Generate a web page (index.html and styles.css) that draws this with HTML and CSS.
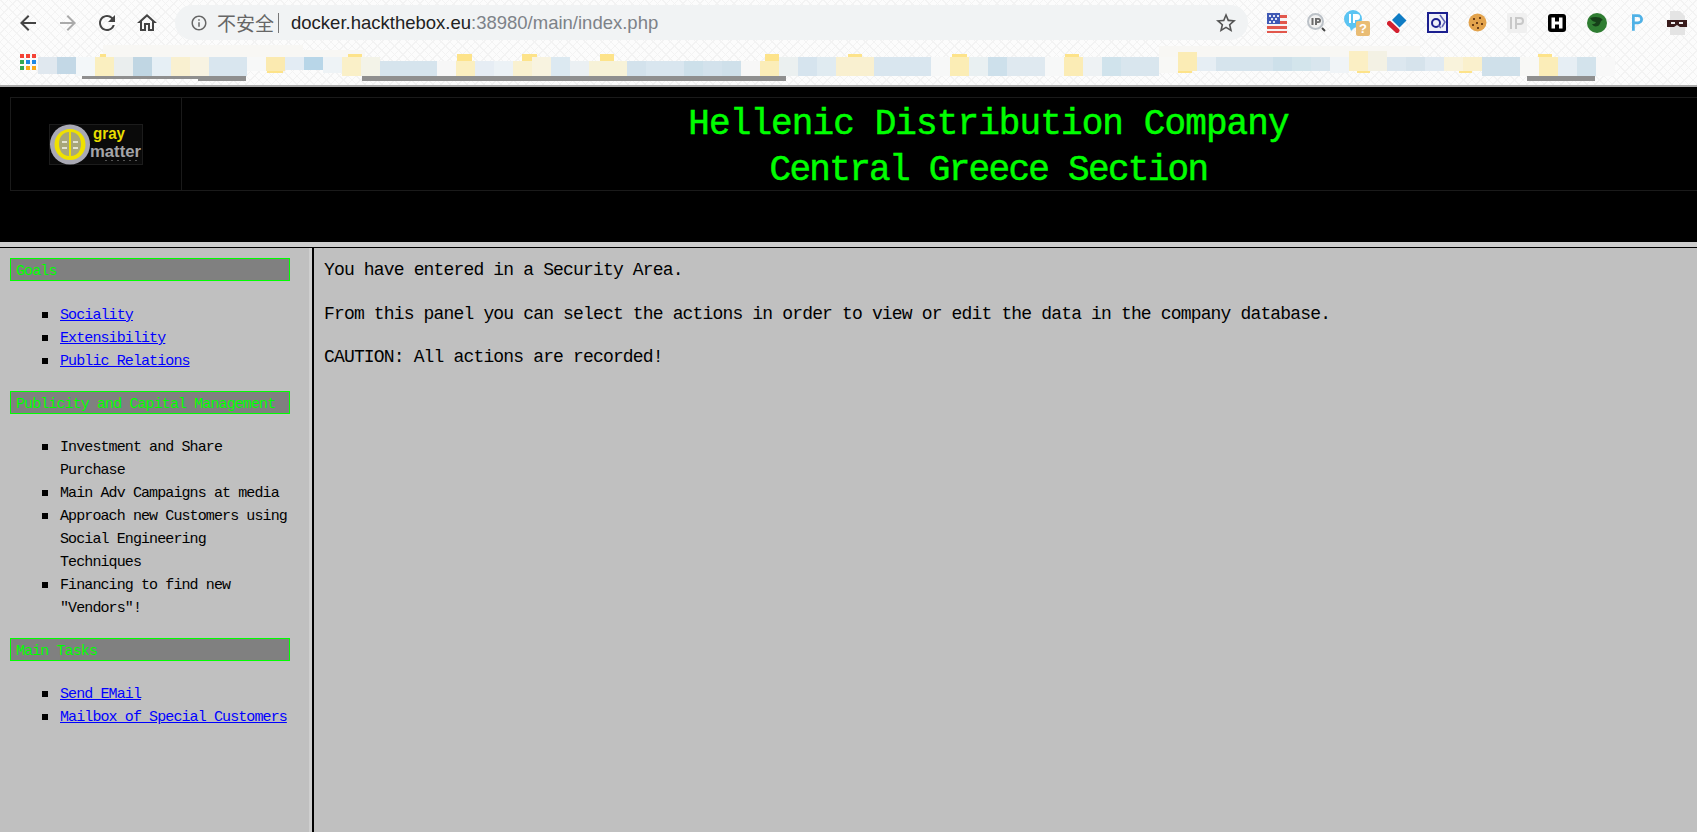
FILE: index.html
```html
<!DOCTYPE html>
<html>
	<head>
		<meta charset="utf-8">
		<title>Hellenic Distribution Company</title>
		<link rel="stylesheet" href="styles.css">
	</head>
	<body>
		<div class="chrome">
			<div class="toolbar">
				<svg class="nav" viewBox="0 0 24 24"><path d="M20 11H7.83l5.59-5.59L12 4l-8 8 8 8 1.41-1.41L7.83 13H20v-2z"/></svg>
				<svg class="nav nav-off" viewBox="0 0 24 24"><path d="M4 11h12.17l-5.59-5.59L12 4l8 8-8 8-1.41-1.41L16.17 13H4v-2z"/></svg>
				<svg class="nav" viewBox="0 0 24 24"><path d="M17.65 6.35A7.958 7.958 0 0 0 12 4c-4.42 0-7.99 3.58-7.99 8s3.57 8 7.99 8c3.73 0 6.84-2.55 7.73-6h-2.08A5.99 5.99 0 0 1 12 18c-3.31 0-6-2.69-6-6s2.69-6 6-6c1.66 0 3.14.69 4.22 1.78L13 11h7V4l-2.35 2.35z"/></svg>
				<svg class="nav" viewBox="0 0 24 24"><path d="M12 5.69l5 4.5V18h-2v-6H9v6H7v-7.81l5-4.5M12 3L2 12h3v8h6v-6h2v6h6v-8h3L12 3z"/></svg>
				<div class="omnibox">
					<svg class="info" viewBox="0 0 24 24"><path d="M11 7h2v2h-2zm0 4h2v6h-2zm1-9C6.48 2 2 6.48 2 12s4.48 10 10 10 10-4.48 10-10S17.52 2 12 2zm0 18c-4.41 0-8-3.59-8-8s3.59-8 8-8 8 3.59 8 8-3.59 8-8 8z"/></svg>
					<span class="unsafe">不安全</span>
					<span class="sep"></span>
					<span class="url">docker.hackthebox.eu<span class="url-rest">:38980/main/index.php</span></span>
					<svg class="star" viewBox="0 0 24 24"><path d="M22 9.24l-7.19-.62L12 2 9.19 8.63 2 9.24l5.46 4.73L5.82 21 12 17.27 18.18 21l-1.63-7.03L22 9.24zM12 15.4l-3.76 2.27 1-4.28-3.32-2.88 4.38-.38L12 6.1l1.71 4.04 4.38.38-3.32 2.88 1 4.28L12 15.4z"/></svg>
				</div>
				<div class="exts">
					<div class="ext">
						<svg width="20" height="20" viewBox="0 0 20 20">
							<rect width="20" height="20" fill="#f6f3f3"/>
							<rect y="2" width="20" height="3" fill="#e2574c"/><rect y="8" width="20" height="3" fill="#e2574c"/><rect y="13" width="20" height="3" fill="#e2574c"/><rect y="18" width="20" height="2" fill="#e2574c"/>
							<rect width="13" height="11" fill="#3f59b5"/>
							<path d="M2 2h2v2H2zM6 2h2v2H6zM10 2h2v2h-2zM4 5h2v2H4zM8 5h2v2H8zM2 8h2v2H2zM6 8h2v2H6z" fill="#dfe4f5"/>
						</svg>
					</div>
					<div class="ext">
						<svg width="20" height="20" viewBox="0 0 20 20">
							<circle cx="8.500" cy="8.500" r="7.500" fill="#f2f2f2" stroke="#bcc2c8" stroke-width="2"/>
							<path d="M4.500 5h2v7h-2zM8 5h3.500a2.500 2.500 0 0 1 0 5H10v2H8zM10 6.800v1.500h1.300a.75.75 0 0 0 0-1.500z" fill="#6b6b6b"/>
							<path d="M15 15l3 3" stroke="#444" stroke-width="2"/>
						</svg>
					</div>
					<div class="ext">
						<svg width="26" height="26" viewBox="0 0 26 26">
							<circle cx="9" cy="9" r="9" fill="#5cc4f2"/>
							<path d="M5 15l2 6 4-4z" fill="#5cc4f2"/>
							<path d="M5 4h2v9H5zM9 4h4a3 3 0 0 1 0 6h-2v3H9z" fill="#fff"/>
							<rect x="12" y="11" width="14" height="15" rx="2" fill="#e9bc74"/>
							<text class="ext-q" x="19" y="23" text-anchor="middle">?</text>
						</svg>
					</div>
					<div class="ext">
						<svg width="20" height="20" viewBox="0 0 20 20">
							<path d="M12 0l7.500 7.500-7 7-7.500-7.500z" fill="#0f7cc4"/>
							<path d="M2.500 10.500l7.500 7" stroke="#d3202f" stroke-width="5" stroke-linecap="round"/>
						</svg>
					</div>
					<div class="ext">
						<svg width="21" height="21" viewBox="0 0 21 21">
							<rect x="1" y="1" width="19" height="19" fill="#eef0f8" stroke="#1b1f8f" stroke-width="2"/>
							<circle cx="9" cy="11" r="4" fill="none" stroke="#1b1f8f" stroke-width="2"/>
							<path d="M11 13l3 3M13 3l5 7-3 5" fill="none" stroke="#5f63b3" stroke-width="1.500"/>
						</svg>
					</div>
					<div class="ext">
						<svg width="19" height="19" viewBox="0 0 19 19">
							<circle cx="9.500" cy="9.500" r="9" fill="#e3a34c"/>
							<path d="M5 5h2v2H5zM11 4h2v2h-2zM8 9h2v2H8zM13 10h2v2h-2zM4 11h2v2H4zM9 14h2v2H9z" fill="#6e3f17"/>
						</svg>
					</div>
					<div class="ext">
						<svg width="20" height="20" viewBox="0 0 20 20">
							<rect width="20" height="20" rx="2" fill="#f0f0f0"/>
							<path d="M3 4h2v12H3zM8 4h5a4 4 0 0 1 0 8h-3v4H8zM10 6v4h3a2 2 0 0 0 0-4z" fill="#c8c8c8"/>
						</svg>
					</div>
					<div class="ext">
						<svg width="18" height="18" viewBox="0 0 18 18">
							<rect width="18" height="18" rx="3" fill="#000"/>
							<path d="M3.500 3.500h3.500v4h4v-4h3.500v11H11v-4H7v4H3.500z" fill="#fff"/>
						</svg>
					</div>
					<div class="ext">
						<svg width="20" height="20" viewBox="0 0 20 20">
							<circle cx="10" cy="10" r="10" fill="#2f7d32"/>
							<path d="M3 5c4-1 9-2 13 2-3 0-2 4-5 6-3 1-5 0-6-2 2 0 3 0 4-2-2 0-4-1-6-4z" fill="#163f19"/>
						</svg>
					</div>
					<div class="ext">
						<svg width="11" height="17" viewBox="0 0 12 18">
							<path d="M0 0h6.500a5.500 5.500 0 0 1 0 11H3v7H0zM3 3v5h3.500a2.500 2.500 0 0 0 0-5z" fill="#4fb1e6"/>
						</svg>
					</div>
					<div class="ext">
						<svg width="20" height="24" viewBox="0 0 20 24">
							<path d="M3 0h10l5 5v19H3z" fill="#e4e4e4"/>
							<path d="M0 9h20v7h-7l-3-2-3 2H0z" fill="#3a1d1d"/>
							<path d="M4 11h4v2H4zM12 11h4v2h-4z" fill="#eee"/>
						</svg>
					</div>
				</div>
			</div>
			<svg class="bookmarks" width="1697" height="41" viewBox="0 0 1697 41">
				<!-- apps icon -->
				<rect x="20" y="9" width="4" height="4" fill="#f44336"/><rect x="26" y="9" width="4" height="4" fill="#f44336"/><rect x="32" y="9" width="4" height="4" fill="#f44336"/>
				<rect x="20" y="15" width="4" height="4" fill="#34a853"/><rect x="26" y="15" width="4" height="4" fill="#1e88e5"/><rect x="32" y="15" width="4" height="4" fill="#1e88e5"/>
				<rect x="20" y="21" width="4" height="4" fill="#34a853"/><rect x="26" y="21" width="4" height="4" fill="#fba919"/><rect x="32" y="21" width="4" height="4" fill="#fba919"/>
				<!-- smudged bookmark names -->
				<g fill="#f8f7f4">
					<rect x="103" y="0" width="200" height="12"/>
					<rect x="265" y="5" width="100" height="10"/>
					<rect x="1159" y="1" width="110" height="12"/>
					<rect x="1260" y="1" width="160" height="12"/>
				</g>
				<g fill="#8f8f8f">
					<rect x="82" y="31" width="116" height="3"/>
					<rect x="198" y="31" width="48" height="5"/>
					<rect x="362" y="31" width="424" height="5"/>
					<rect x="1527" y="31" width="68" height="5"/>
				</g>
				<g fill="#fde38a">
					<rect x="100" y="9" width="6" height="4"/>
					<rect x="348" y="9" width="14" height="4"/>
					<rect x="457" y="9" width="15" height="8"/>
					<rect x="522" y="9" width="15" height="8"/>
					<rect x="600" y="9" width="14" height="8"/>
					<rect x="765" y="9" width="14" height="8"/>
					<rect x="848" y="9" width="14" height="3"/>
					<rect x="952" y="9" width="15" height="3"/>
					<rect x="1065" y="9" width="14" height="3"/>
					<rect x="1538" y="9" width="14" height="3"/>
					<rect x="267" y="26" width="16" height="2"/>
					<rect x="1178" y="26" width="14" height="2"/>
					<rect x="1357" y="26" width="13" height="2"/>
					<rect x="1459" y="26" width="13" height="2"/>
				</g>
				<rect x="38" y="12" width="19" height="17" fill="#e0e8ef"/>
				<rect x="57" y="12" width="19" height="17" fill="#c3d8e6"/>
				<rect x="76" y="12" width="19" height="19" fill="#f3f7f9"/>
				<rect x="95" y="12" width="19" height="19" fill="#faefc0"/>
				<rect x="114" y="12" width="19" height="19" fill="#eaeeee"/>
				<rect x="133" y="12" width="19" height="19" fill="#c0d6e3"/>
				<rect x="152" y="12" width="19" height="19" fill="#e6eff5"/>
				<rect x="171" y="12" width="19" height="19" fill="#f9f0d0"/>
				<rect x="190" y="12" width="19" height="19" fill="#f8f3e2"/>
				<rect x="209" y="12" width="38" height="19" fill="#d9e6ef"/>
				<rect x="247" y="12" width="19" height="14" fill="#f7f8f8"/>
				<rect x="266" y="12" width="19" height="14" fill="#fbeab0"/>
				<rect x="285" y="12" width="19" height="13" fill="#e3ecf4"/>
				<rect x="304" y="12" width="19" height="13" fill="#b8d6e8"/>
				<rect x="323" y="12" width="19" height="16" fill="#eef3f6"/>
				<rect x="342" y="12" width="19" height="19" fill="#faf0c8"/>
				<rect x="361" y="12" width="19" height="19" fill="#f3f3e8"/>
				<rect x="380" y="16" width="57" height="15" fill="#d6e4ed"/>
				<rect x="437" y="16" width="19" height="15" fill="#f7f7f7"/>
				<rect x="456" y="16" width="19" height="15" fill="#fbefc0"/>
				<rect x="475" y="16" width="19" height="15" fill="#e6edf4"/>
				<rect x="494" y="16" width="19" height="15" fill="#ecf2f6"/>
				<rect x="513" y="16" width="19" height="15" fill="#f9f1d0"/>
				<rect x="532" y="12" width="19" height="19" fill="#f8f3e0"/>
				<rect x="551" y="12" width="19" height="19" fill="#dce9f1"/>
				<rect x="570" y="16" width="19" height="15" fill="#ebf0f3"/>
				<rect x="589" y="16" width="38" height="15" fill="#f7f2d8"/>
				<rect x="627" y="16" width="19" height="15" fill="#d3e2ec"/>
				<rect x="646" y="16" width="38" height="15" fill="#d9e6ef"/>
				<rect x="684" y="16" width="19" height="15" fill="#cde0ea"/>
				<rect x="703" y="16" width="19" height="15" fill="#d3e2ec"/>
				<rect x="722" y="16" width="19" height="15" fill="#cfe0ea"/>
				<rect x="741" y="16" width="19" height="15" fill="#f7f7f7"/>
				<rect x="760" y="16" width="19" height="15" fill="#fbedb8"/>
				<rect x="779" y="12" width="19" height="19" fill="#ebf0f0"/>
				<rect x="798" y="12" width="19" height="19" fill="#d6e4ee"/>
				<rect x="817" y="12" width="19" height="19" fill="#e0ebf1"/>
				<rect x="836" y="12" width="38" height="19" fill="#f9f0d0"/>
				<rect x="874" y="12" width="57" height="19" fill="#d9e6ef"/>
				<rect x="931" y="12" width="19" height="19" fill="#f7f8f8"/>
				<rect x="950" y="12" width="19" height="19" fill="#fbedb5"/>
				<rect x="969" y="12" width="19" height="19" fill="#e9f0f2"/>
				<rect x="988" y="12" width="19" height="19" fill="#cde0eb"/>
				<rect x="1007" y="12" width="38" height="19" fill="#dfe9f0"/>
				<rect x="1045" y="12" width="19" height="19" fill="#f7f8f8"/>
				<rect x="1064" y="12" width="19" height="19" fill="#fbecb5"/>
				<rect x="1083" y="12" width="19" height="19" fill="#eef2f4"/>
				<rect x="1102" y="12" width="19" height="19" fill="#d0e3ec"/>
				<rect x="1121" y="12" width="38" height="19" fill="#d9e6ee"/>
				<rect x="1159" y="12" width="19" height="16" fill="#f8f8f6"/>
				<rect x="1178" y="7" width="19" height="19" fill="#fbecb5"/>
				<rect x="1197" y="12" width="19" height="14" fill="#e6eef4"/>
				<rect x="1216" y="12" width="57" height="14" fill="#d6e4ed"/>
				<rect x="1273" y="12" width="19" height="14" fill="#cde0ea"/>
				<rect x="1292" y="12" width="19" height="14" fill="#d3e5ec"/>
				<rect x="1311" y="12" width="19" height="14" fill="#d9e6ee"/>
				<rect x="1330" y="12" width="19" height="16" fill="#f0f4f7"/>
				<rect x="1349" y="6" width="19" height="20" fill="#fbefc4"/>
				<rect x="1368" y="6" width="19" height="20" fill="#f3f1e4"/>
				<rect x="1387" y="12" width="19" height="14" fill="#dce7ef"/>
				<rect x="1406" y="12" width="19" height="14" fill="#d6e3ec"/>
				<rect x="1425" y="12" width="19" height="14" fill="#e0eaf2"/>
				<rect x="1444" y="12" width="19" height="14" fill="#f9f3dc"/>
				<rect x="1463" y="12" width="19" height="14" fill="#faf0cc"/>
				<rect x="1482" y="12" width="38" height="19" fill="#cfe0ea"/>
				<rect x="1520" y="12" width="19" height="19" fill="#f8f8f6"/>
				<rect x="1539" y="12" width="19" height="19" fill="#fbedb8"/>
				<rect x="1558" y="12" width="19" height="19" fill="#e6eef4"/>
				<rect x="1577" y="12" width="19" height="19" fill="#d3e3ec"/>
				<rect x="1596" y="12" width="19" height="19" fill="#f8f8f8"/>
			</svg>
		</div>

		<header class="top">
			<div class="top-table">
				<div class="logo-cell">
					<svg class="logo" width="94" height="41" viewBox="0 0 94 41">
						<rect x=".5" y=".5" width="93" height="40" fill="#0a0a0a" stroke="#1c1c1c"/>
						<circle cx="21" cy="20.500" r="20" fill="#a9a9b4"/>
						<circle cx="21" cy="20.500" r="15.500" fill="#efe100"/>
						<path d="M20 8c-5 0-10 4-10 12 0 7 4 12 10 12zM22 8c5 0 10 4 10 12 0 7-4 12-10 12z" fill="#a8a77a"/>
						<path d="M13 17h5v2h-5zM24 17h5v2h-5zM13 23h5v2h-5zM24 23h5v2h-5z" fill="#e4e4d2"/>
						<text class="logo-gray" x="44" y="15" textLength="32" lengthAdjust="spacingAndGlyphs">gray</text>
						<text class="logo-matter" x="41" y="33" textLength="51" lengthAdjust="spacingAndGlyphs">matter</text>
						<path d="M56 36h2v1h-2zM62 36h2v1h-2zM68 36h2v1h-2zM74 36h2v1h-2zM80 36h2v1h-2zM86 36h2v1h-2z" fill="#555"/>
					</svg>
				</div>
				<div class="title-cell">
					<div class="title-line">Hellenic Distribution Company</div>
					<div class="title-line title-sub">Central Greece Section</div>
				</div>
			</div>
		</header>
		<div class="frame-gap"></div>

		<div class="bottom">
			<aside class="side">
				<h3 class="side-head">Goals</h3>
				<ul class="side-list">
					<li><a href="#">Sociality</a></li>
					<li><a href="#">Extensibility</a></li>
					<li><a href="#">Public Relations</a></li>
				</ul>
				<h3 class="side-head">Publicity and Capital Management</h3>
				<ul class="side-list">
					<li>Investment and Share Purchase</li>
					<li>Main Adv Campaigns at media</li>
					<li>Approach new Customers using Social Engineering Techniques</li>
					<li>Financing to find new "Vendors"!</li>
				</ul>
				<h3 class="side-head">Main Tasks</h3>
				<ul class="side-list">
					<li><a href="#">Send EMail</a></li>
					<li><a href="#">Mailbox of Special Customers</a></li>
				</ul>
			</aside>
			<div class="side-edge"></div>
			<main class="content">
				<p>You have entered in a Security Area.</p>
				<p>From this panel you can select the actions in order to view or edit the data in the company database.</p>
				<p>CAUTION: All actions are recorded!</p>
			</main>
		</div>
	</body>
</html>
```

FILE: styles.css
```css
*{margin: 0; padding: 0; box-sizing: border-box;}
html,body{height: 100%; overflow: hidden;}
body{display: flex; flex-direction: column; background: #c0c0c0; font-family: "Liberation Mono", monospace;}

/* browser bar */
.chrome{height: 87px; flex: none; border-bottom: 2px solid #aaa;
	background-color: #fcfcfc;
	background-image: repeating-linear-gradient(45deg, #f3f3f3 0 1px, transparent 1px 6px), repeating-linear-gradient(-45deg, #f3f3f3 0 1px, transparent 1px 6px);}
.toolbar{display: flex; align-items: center; height: 45px; padding: 0 0 0 16px;}
.nav{width: 24px; height: 24px; margin-right: 15.500px; fill: #444;}
.nav-off{fill: #aaa;}
.omnibox{display: flex; align-items: center; flex: 1; height: 35px; margin-left: 1px; padding: 0 10px 0 15px; border-radius: 18px; background: #f1f3f4; font-family: "Liberation Sans", "Noto Sans CJK SC", sans-serif;}
.info{width: 18px; height: 18px; fill: #666; flex: none;}
.unsafe{margin-left: 9px; font-size: 19px; color: #666; font-family: "Noto Sans CJK SC", sans-serif;}
.sep{width: 1px; height: 20px; margin: 0 12px 0 4px; background: #777;}
.url{flex: 1; font-size: 18.500px; color: #222;}
.url-rest{color: #7d8288;}
.star{width: 24px; height: 24px; fill: #555;}
.exts{display: flex; margin-left: 9px;}
.ext{display: flex; align-items: center; justify-content: center; width: 40px; height: 36px;}
.ext svg{flex: none;}
.ext-q{font: bold 13px "Liberation Sans", sans-serif; fill: #fff;}
.bookmarks{display: block;}

/* top frame */
.top{height: 155px; flex: none; padding: 10px 0 0 10px; background: #000;}
.top-table{display: flex; height: 94px; border: 1px solid #1a1a1a; border-right: 0;}
.logo-cell{display: flex; align-items: center; justify-content: center; width: 171px; border-right: 1px solid #1a1a1a;}
.logo-gray{font: bold 16px "Liberation Sans", sans-serif; fill: #e8de00;}
.logo-matter{font: bold 17px "Liberation Sans", sans-serif; fill: #a5a5a8;}
.title-cell{flex: 1; padding: 4px 0 0 98px; text-align: center;}
.title-line{height: 46px; line-height: 46px; font-size: 36px; letter-spacing: -0.900px; color: #0f0; -webkit-text-stroke: 0.500px #0f0;}
.title-sub{letter-spacing: -1.700px;}
.frame-gap{height: 6px; flex: none; background: #ccc; border-bottom: 1px solid #000;}

/* bottom frames */
.bottom{display: flex; flex: 1;}
.side{width: 309px; flex: none; padding: 10px 19px 0 10px; background: #c0c0c0;}
.side-edge{width: 5px; flex: none; background: #cfcfcf; border-right: 2px solid #000;}
.side-head{height: 23px; padding-left: 5px; border: 1px solid #0f0; background: #808080; font-size: 15px; font-weight: normal; line-height: 25px; letter-spacing: -0.900px; color: #0f0;}
.side-list{margin: 22px 0 18px; padding-left: 50px; list-style: none; font-size: 15px; line-height: 23px; letter-spacing: -0.900px; color: #000;}
.side-head:first-child + .side-list{margin-top: 23px;}
.side-list li{position: relative;}
.side-list li::before{content: ""; position: absolute; left: -18px; top: 8px; width: 6px; height: 6px; background: #000;}
.side-list a{color: #00f;}
.content{flex: 1; padding: 11px 0 0 10px; background: #c0c0c0; font-size: 18px; letter-spacing: -0.840px; color: #000;}
.content p{height: 43.500px; line-height: 22px;}
```
